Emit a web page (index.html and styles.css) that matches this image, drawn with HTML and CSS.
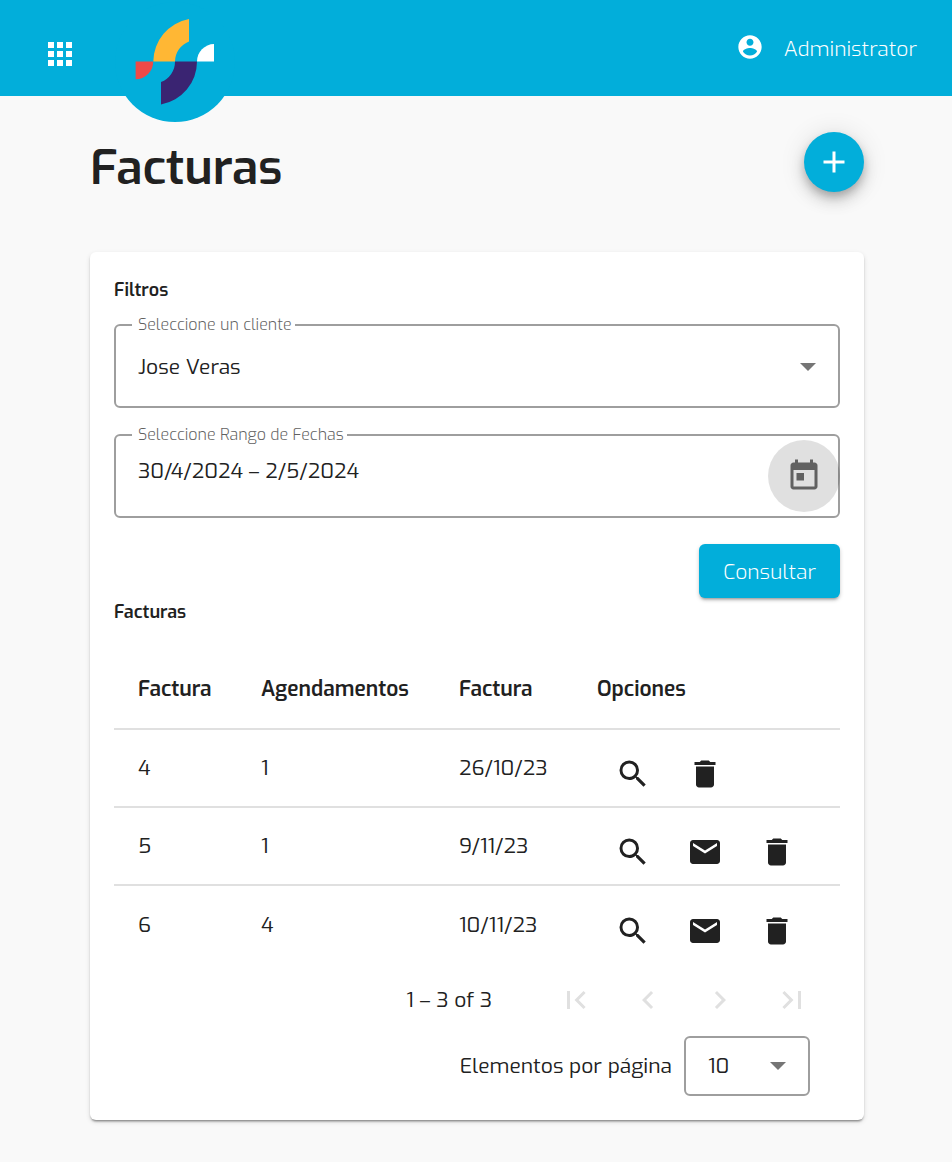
FILE: index.html
```html
<!DOCTYPE html>
<html lang="es">
<head>
    <meta charset="UTF-8">
    <meta name="viewport" content="width=device-width, initial-scale=1.0">
    <title>Facturas</title>
    <link rel="stylesheet" href="styles.css">
</head>
<body>
    <!-- Shared icons -->
    <svg class="icon-defs" aria-hidden="true">
        <symbol id="search" viewBox="0 0 24 24"><path d="M15.5 14h-.79l-.28-.27A6.471 6.471 0 0 0 16 9.5 6.5 6.5 0 1 0 9.5 16c1.61 0 3.09-.59 4.23-1.57l.27.28v.79l5 4.99L20.49 19l-4.99-5zm-6 0C7.01 14 5 11.99 5 9.5S7.01 5 9.5 5 14 7.01 14 9.5 11.99 14 9.5 14z"/></symbol>
        <symbol id="mail" viewBox="0 0 24 24"><path d="M20 4H4c-1.100 0-1.990.9-1.990 2L2 18c0 1.100.9 2 2 2h16c1.100 0 2-.9 2-2V6c0-1.100-.9-2-2-2zm0 4l-8 5-8-5V6l8 5 8-5v2z"/></symbol>
        <symbol id="delete" viewBox="0 0 24 24"><path d="M6 19c0 1.100.9 2 2 2h8c1.100 0 2-.9 2-2V7H6v12zM19 4h-3.500l-1-1h-5l-1 1H5v2h14V4z"/></symbol>
    </svg>

    <header class="toolbar">
        <button class="icon-btn" aria-label="Menú">
            <svg class="icon" viewBox="0 0 24 24"><path d="M4 8h4V4H4v4zm6 12h4v-4h-4v4zm-6 0h4v-4H4v4zm0-6h4v-4H4v4zm6 0h4v-4h-4v4zm6-10v4h4V4h-4zm-6 4h4V4h-4v4zm6 6h4v-4h-4v4zm0 6h4v-4h-4v4z"/></svg>
        </button>
        <a class="logo" href="#" aria-label="Inicio">
            <svg viewBox="0 0 120 120">
                <path fill="#ffb734" d="M38.300 59.500A43.700 43.700 0 0 1 74 17V39.500A21.800 21.800 0 0 0 60 59.500Z"/>
                <path fill="#3a2472" d="M60 59.500H82A43.700 43.700 0 0 1 46 102.500V80A21.700 21.700 0 0 0 60 59.500Z"/>
                <path fill="#ee4a47" d="M20.600 59.500H38.200A17.600 17.600 0 0 1 20.600 77.300Z"/>
                <path fill="#fff" d="M82 59.500A17.200 17.500 0 0 1 99 42V59.500Z"/>
            </svg>
        </a>
        <button class="user">
            <svg class="user-icon" viewBox="0 0 24 24"><path d="M12 2C6.480 2 2 6.480 2 12s4.480 10 10 10 10-4.480 10-10S17.520 2 12 2zm0 3c1.660 0 3 1.340 3 3s-1.340 3-3 3-3-1.340-3-3 1.340-3 3-3zm0 14.200c-2.500 0-4.710-1.280-6-3.220.03-1.990 4-3.080 6-3.080 1.990 0 5.970 1.090 6 3.080-1.290 1.940-3.500 3.220-6 3.220z"/></svg>
            <span class="user-name">Administrator</span>
        </button>
    </header>

    <main class="page">
        <div class="page-header">
            <h1>Facturas</h1>
            <button class="fab" aria-label="Agregar factura">
                <svg class="icon" viewBox="0 0 24 24"><path d="M19 13h-6v6h-2v-6H5v-2h6V5h2v6h6v2z"/></svg>
            </button>
        </div>

        <div class="card">
            <h2>Filtros</h2>
            <fieldset class="field">
                <legend><label for="client">Seleccione un cliente</label></legend>
                <div class="select-box">
                    <select id="client">
                        <option>Jose Veras</option>
                    </select>
                    <span class="arrow"></span>
                </div>
            </fieldset>
            <fieldset class="field date-field">
                <legend><label for="dates">Seleccione Rango de Fechas</label></legend>
                <input type="text" id="dates" value="30/4/2024 – 2/5/2024">
                <button class="icon-btn calendar-btn" aria-label="Abrir calendario">
                    <svg class="icon" viewBox="0 0 24 24"><path d="M19 3h-1V1h-2v2H8V1H6v2H5c-1.110 0-1.990.9-1.990 2L3 19c0 1.100.89 2 2 2h14c1.100 0 2-.9 2-2V5c0-1.100-.9-2-2-2zm0 16H5V8h14v11zM7 10h5v5H7z"/></svg>
                </button>
            </fieldset>
            <div class="actions">
                <button class="submit-btn">Consultar</button>
            </div>

            <h2>Facturas</h2>
            <table>
                <thead>
                    <tr>
                        <th class="col-id">Factura</th>
                        <th class="col-count">Agendamentos</th>
                        <th class="col-date">Factura</th>
                        <th>Opciones</th>
                    </tr>
                </thead>
                <tbody>
                    <tr>
                        <td>4</td>
                        <td>1</td>
                        <td>26/10/23</td>
                        <td>
                            <div class="options">
                                <button class="icon-btn" aria-label="Ver"><svg class="icon"><use href="#search"/></svg></button>
                                <button class="icon-btn" aria-label="Eliminar"><svg class="icon"><use href="#delete"/></svg></button>
                            </div>
                        </td>
                    </tr>
                    <tr>
                        <td>5</td>
                        <td>1</td>
                        <td>9/11/23</td>
                        <td>
                            <div class="options">
                                <button class="icon-btn" aria-label="Ver"><svg class="icon"><use href="#search"/></svg></button>
                                <button class="icon-btn" aria-label="Enviar"><svg class="icon"><use href="#mail"/></svg></button>
                                <button class="icon-btn" aria-label="Eliminar"><svg class="icon"><use href="#delete"/></svg></button>
                            </div>
                        </td>
                    </tr>
                    <tr>
                        <td>6</td>
                        <td>4</td>
                        <td>10/11/23</td>
                        <td>
                            <div class="options">
                                <button class="icon-btn" aria-label="Ver"><svg class="icon"><use href="#search"/></svg></button>
                                <button class="icon-btn" aria-label="Enviar"><svg class="icon"><use href="#mail"/></svg></button>
                                <button class="icon-btn" aria-label="Eliminar"><svg class="icon"><use href="#delete"/></svg></button>
                            </div>
                        </td>
                    </tr>
                </tbody>
            </table>

            <div class="paginator">
                <div class="range">
                    <span class="range-label">1 – 3 of 3</span>
                    <button class="icon-btn" aria-label="Primera página" disabled><svg class="icon" viewBox="0 0 24 24"><path d="M18.410 16.590L13.820 12l4.590-4.590L17 6l-6 6 6 6zM6 6h2v12H6z"/></svg></button>
                    <button class="icon-btn" aria-label="Página anterior" disabled><svg class="icon" viewBox="0 0 24 24"><path d="M15.410 7.410L14 6l-6 6 6 6 1.410-1.410L10.830 12z"/></svg></button>
                    <button class="icon-btn" aria-label="Página siguiente" disabled><svg class="icon" viewBox="0 0 24 24"><path d="M10 6L8.590 7.410 13.170 12l-4.580 4.590L10 18l6-6z"/></svg></button>
                    <button class="icon-btn" aria-label="Última página" disabled><svg class="icon" viewBox="0 0 24 24"><path d="M5.590 7.410L10.180 12l-4.590 4.590L7 18l6-6-6-6zM16 6h2v12h-2z"/></svg></button>
                </div>
                <div class="page-size">
                    <label for="pageSize">Elementos por página</label>
                    <div class="select-box size-box">
                        <select id="pageSize">
                            <option>10</option>
                        </select>
                        <span class="arrow"></span>
                    </div>
                </div>
            </div>
        </div>
    </main>
</body>
</html>
```
FILE: styles.css
```css
* {
    box-sizing: border-box;
}
body {
    margin: 0;
    background-color: #f9f9f9;
    color: #212121;
    font-family: Exo, "Exo 2", Roboto, sans-serif;
    font-size: 21px;
    line-height: 30px;
}
button, input, select {
    font: inherit;
    color: inherit;
    border: none;
    background: none;
    padding: 0;
    margin: 0;
}
button {
    cursor: pointer;
}
h1, h2 {
    margin: 0;
}
h1 {
    font-size: 48px;
    line-height: 72px;
    font-weight: 600;
}
h2 {
    font-size: 18px;
    line-height: 28px;
    font-weight: 600;
}
.icon-defs {
    display: none;
}
.icon {
    display: block;
    width: 36px;
    height: 36px;
    fill: currentColor;
}
.icon-btn {
    display: flex;
    align-items: center;
    justify-content: center;
    width: 72px;
    height: 72px;
}

/* Toolbar */
.toolbar {
    display: flex;
    align-items: flex-start;
    height: 96px;
    padding: 0 35px 0 24px;
    background-color: #02aeda;
    color: #fff;
}
.toolbar .icon-btn {
    margin-top: 18px;
}
.logo {
    width: 120px;
    height: 120px;
    margin: 2px 0 0 19px;
    border-radius: 50%;
    background-color: #02aeda;
}
.logo svg {
    display: block;
}
.user {
    display: flex;
    align-items: center;
    gap: 20px;
    height: 94px;
    margin-left: auto;
    font-weight: 300;
}
.user-name {
    padding-top: 4px;
}
.user-icon {
    width: 28px;
    height: 28px;
    fill: currentColor;
}

/* Page */
.page {
    padding: 36px 88px 40px 90px;
}
.page-header {
    display: flex;
    justify-content: space-between;
    height: 60px;
    margin-bottom: 60px;
}
.fab {
    display: flex;
    align-items: center;
    justify-content: center;
    width: 60px;
    height: 60px;
    border-radius: 50%;
    background-color: #02aeda;
    color: #fff;
    box-shadow: 0 5px 8px -1px rgba(0, 0, 0, 0.2), 0 9px 15px rgba(0, 0, 0, 0.14), 0 2px 27px rgba(0, 0, 0, 0.12);
}
.card {
    padding: 24px;
    border-radius: 6px;
    background-color: #fff;
    box-shadow: 0 3px 2px -2px rgba(0, 0, 0, 0.3), 0 2px 2px rgba(0, 0, 0, 0.14), 0 2px 5px rgba(0, 0, 0, 0.12);
}

/* Filters */
.field {
    display: flex;
    height: 93px;
    margin: 11px 0 17px;
    padding: 0 0 0 16px;
    border: 2px solid #9e9e9e;
    border-radius: 6px;
    min-width: 0;
}
.field legend {
    padding: 0 3px 0 6px;
    color: #616161;
    font-size: 16px;
    font-weight: 300;
    line-height: 20px;
}
.select-box {
    position: relative;
    flex: 1;
    align-self: flex-start;
}
.select-box select {
    appearance: none;
    display: block;
    width: 100%;
    height: 64px;
    padding-left: 6px;
}
.arrow {
    position: absolute;
    top: 50%;
    right: 22px;
    margin-top: -4px;
    border: 8px solid transparent;
    border-top-color: #757575;
    border-bottom: none;
    pointer-events: none;
}
.date-field {
    margin-bottom: 26px;
}
.date-field .icon-btn,
.date-field input {
    margin-top: -5px;
}
.date-field input {
    flex: 1;
    min-width: 0;
    height: 62px;
    padding-left: 6px;
}
.calendar-btn {
    margin-right: -2px;
    border-radius: 50%;
    background-color: rgba(0, 0, 0, 0.12);
    color: #616161;
}
.actions {
    display: flex;
    justify-content: flex-end;
}
.submit-btn {
    height: 54px;
    padding: 2px 24px 0;
    border-radius: 6px;
    background-color: #02aeda;
    color: #fff;
    font-weight: 300;
    box-shadow: 0 3px 3px -2px rgba(0, 0, 0, 0.3), 0 2px 4px rgba(0, 0, 0, 0.2);
}

/* Invoices table */
table {
    width: 100%;
    margin-top: 20px;
    border-collapse: separate;
    border-spacing: 0;
    table-layout: fixed;
}
th, td {
    padding: 0 0 0 24px;
    text-align: left;
    border-bottom: 2px solid #e0e0e0;
}
th {
    height: 84px;
    padding-top: 4px;
    font-weight: 600;
}
td {
    height: 78px;
}
tbody tr:last-child td {
    border-bottom: none;
}
.col-id {
    width: 123px;
}
.col-count {
    width: 198px;
}
.col-date {
    width: 138px;
}
.options {
    display: flex;
    height: 76px;
    padding-top: 8px;
}

/* Paginator */
.paginator {
    display: flex;
    flex-direction: column;
    align-items: flex-end;
    padding-right: 12px;
}
.range {
    display: flex;
    align-items: center;
}
.range-label {
    margin-right: 48px;
}
.range .icon-btn {
    color: #e0e0e0;
}
.page-size {
    display: flex;
    align-items: center;
    gap: 12px;
    padding-right: 18px;
}
.size-box {
    flex: none;
    width: 126px;
    border: 2px solid #9e9e9e;
    border-radius: 6px;
}
.size-box select {
    height: 56px;
    padding-left: 22px;
}
```
